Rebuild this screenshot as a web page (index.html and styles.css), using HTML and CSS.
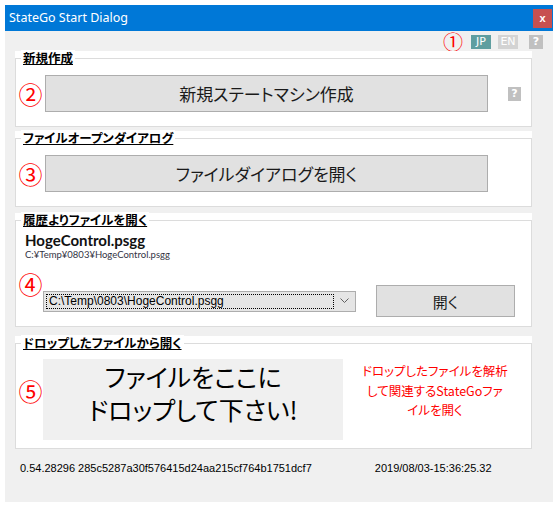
FILE: index.html
```html
<!DOCTYPE html>
<html lang="ja">
<head>
<meta charset="utf-8">
<title>StateGo Start Dialog</title>
<link rel="stylesheet" href="styles.css">
</head>
<body>
<div class="window">
  <div class="titlebar">
    <span class="title">StateGo Start Dialog</span>
    <span class="close">x</span>
  </div>
  <div class="content">
    <div class="toprow">
      <span class="num num-small">①</span>
      <span class="lang jp">JP</span>
      <span class="lang en">EN</span>
      <span class="lang help">?</span>
    </div>

    <section class="group">
      <div class="frame row">
        <span class="legend">新規作成</span>
        <span class="num">②</span>
        <button class="btn big">新規ステートマシン作成</button>
        <span class="help-small">?</span>
      </div>
    </section>

    <section class="group g2">
      <div class="frame row">
        <span class="legend">ファイルオープンダイアログ</span>
        <span class="num">③</span>
        <button class="btn big">ファイルダイアログを開く</button>
      </div>
    </section>

    <section class="group g3">
      <div class="frame recent">
        <span class="legend">履歴よりファイルを開く</span>
        <div class="recent-name">HogeControl.psgg</div>
        <div class="recent-path">C:¥Temp¥0803¥HogeControl.psgg</div>
        <div class="recent-row">
          <span class="num num-up">④</span>
          <div class="combo">
            <span class="combo-text">C:\Temp\0803\HogeControl.psgg</span>
            <svg class="combo-arrow" width="9" height="6" viewBox="0 0 9 6"><path d="M0.5 0.5 L4.5 4.5 L8.5 0.5" fill="none" stroke="#606060" stroke-width="1"/></svg>
          </div>
          <button class="btn open">開く</button>
        </div>
      </div>
    </section>

    <section class="group g4">
      <div class="frame drop-row">
        <span class="legend">ドロップしたファイルから開く</span>
        <span class="num num-up2">⑤</span>
        <div class="drop">ファイルをここに<br>ドロップして下さい!</div>
        <p class="drop-note">ドロップしたファイルを解析<br>して関連するStateGoファ<br>イルを開く</p>
      </div>
    </section>

    <div class="footer">
      <span class="version">0.54.28296 285c5287a30f576415d24aa215cf764b1751dcf7</span>
      <span class="date">2019/08/03-15:36:25.32</span>
    </div>
  </div>
</div>
</body>
</html>
```

FILE: styles.css
```css
* { box-sizing: border-box; }

body {
  margin: 0;
  padding: 5px;
  background: #ffffff;
  font-family: "Noto Sans CJK JP", sans-serif;
}

.window {
  width: 548px;
  height: 497px;
  background: #f0f0f0;
  display: flex;
  flex-direction: column;
}

.titlebar {
  height: 26px;
  background: #0078d7;
  display: flex;
  align-items: center;
  padding: 0 1px 0 4px;
}

.title {
  color: #ffffff;
  font: 12.5px/16px "Noto Sans", sans-serif;
}

.close {
  margin-left: auto;
  width: 19px;
  height: 19px;
  background: #c75050;
  color: #ffffff;
  font: bold 11px/19px "Liberation Sans", sans-serif;
  text-align: center;
}

.content {
  padding: 0 10px;
  display: flex;
  flex-direction: column;
}

.toprow {
  height: 20px;
  display: flex;
  align-items: center;
  justify-content: flex-end;
  padding-top: 2px;
}

.num {
  color: #ff0000;
  font: 24px/24px "Noto Sans CJK JP", sans-serif;
  width: 29px;
  text-align: center;
  flex: none;
}

.num-small {
  font-size: 20px;
  line-height: 20px;
  width: auto;
  margin-right: 8px;
}

.lang {
  height: 14px;
  color: #ffffff;
  font: 11px/14px "DejaVu Sans", sans-serif;
  text-align: center;
}

.jp { background: #5f9ea0; width: 20px; }
.en { background: #d3d3d3; width: 20px; margin-left: 7px; }
.help { background: #c0c0c0; width: 14px; margin-left: 11px; font-weight: bold; }

.group {
  background: #ffffff;
  padding-top: 7px;
  margin-right: 11px;
}

.g2 { margin-top: 4px; }
.g3 { margin-top: 6px; }
.g4 { margin-top: 9px; }

.frame {
  border: 1px solid #dcdcdc;
  position: relative;
}

.legend {
  position: absolute;
  top: -9px;
  left: 5px;
  padding: 0 2px;
  background: #ffffff;
  color: #000000;
  font: bold 12.5px/16px "Noto Sans CJK JP", sans-serif;
  font-feature-settings: "palt";
  text-decoration: underline;
}

.row {
  display: flex;
  align-items: center;
  padding: 16px 0 14px 0;
}

.btn {
  background: #e1e1e1;
  border: 1px solid #adadad;
  color: #1a1a1a;
  font-family: "Noto Sans CJK JP", sans-serif;
  font-feature-settings: "palt";
  padding: 0;
  margin: 0;
}

.big {
  width: 443px;
  height: 37px;
  font-size: 17px;
}

.help-small {
  margin-left: 20px;
  width: 13px;
  height: 14px;
  background: #c0c0c0;
  color: #ffffff;
  font: bold 11px/14px "DejaVu Sans", sans-serif;
  text-align: center;
}

.recent {
  padding: 10px 0 9px 9px;
}

.recent-name {
  font: bold 15px/18px "Lato", sans-serif;
  color: #111111;
}

.recent-path {
  font: 9.5px/11px "Lato", sans-serif;
  color: #333344;
}

.recent-row {
  display: flex;
  align-items: center;
  margin-left: -9px;
  margin-top: 25px;
}

.num-up {
  align-self: flex-start;
  margin-top: -13px;
  margin-right: -2px;
}

.combo {
  width: 313px;
  height: 21px;
  background: #e5e5e5;
  border: 1px solid #adadad;
  display: flex;
  align-items: center;
  padding: 2px;
}

.combo-text {
  flex: 1;
  height: 15px;
  border: 1px dotted #000000;
  font: 12px/13px "Liberation Sans", sans-serif;
  color: #000000;
  padding-left: 2px;
}

.combo-arrow {
  margin: 0 4px 0 6px;
}

.open {
  width: 139px;
  height: 32px;
  margin-left: 20px;
  font-size: 15px;
}

.drop-row {
  display: flex;
  align-items: flex-start;
  padding: 15px 0 8px 0;
}

.num-up2 {
  margin-top: 20px;
  margin-right: -2px;
}

.drop {
  width: 300px;
  height: 81px;
  background: #f0f0f0;
  color: #000000;
  font: 25px/33px "Noto Sans CJK JP", sans-serif;
  font-feature-settings: "palt";
  text-align: center;
  padding-top: 1px;
}

.drop-note {
  margin: 2px 0 0 17px;
  width: 150px;
  white-space: nowrap;
  color: #ff0000;
  font: 12.5px/19.5px "Noto Sans CJK JP", sans-serif;
  font-feature-settings: "palt";
  text-align: center;
}

.footer {
  display: flex;
  padding: 12px 0 0 5px;
  font: 11px/14px "Liberation Sans", sans-serif;
  color: #000000;
}

.date {
  margin-left: 63px;
}
```
